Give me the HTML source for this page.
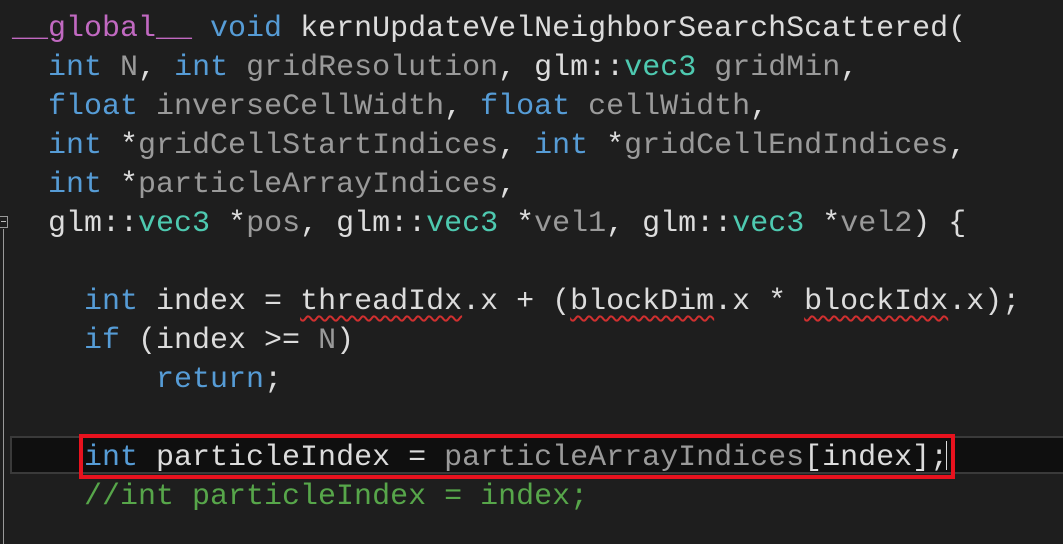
<!DOCTYPE html>
<html><head><meta charset="utf-8"><style>
html,body{margin:0;padding:0;background:#1e1e1e;width:1063px;height:544px;overflow:hidden;position:relative}
.l{position:absolute;left:12px;height:39px;line-height:39px;font-family:"Liberation Mono",monospace;font-size:30px;color:#dcdcdc;white-space:pre;letter-spacing:0;margin-top:2px}
.k{color:#569cd6}.m{color:#c169c1}.p{color:#9a9a9a}.t{color:#4ec9b0}.c{color:#57a64a}
.sq{text-decoration:underline wavy #d03030;text-decoration-thickness:1.5px;text-underline-offset:6px}
</style></head><body>
<div style="position:absolute;left:10px;top:436px;width:1060px;height:38px;background:#0f0f0f;border:2px solid #3a3a3a;box-sizing:border-box"></div>
<div style="position:absolute;left:79px;top:434px;width:876px;height:45px;border:4px solid #e8121e;box-sizing:border-box"></div>
<div style="position:absolute;left:946px;top:441px;width:1px;height:29px;background:#ddd"></div>
<div style="position:absolute;left:0;top:216px;width:8px;height:12px;border:1px solid #999;border-left:none;box-sizing:border-box"></div>
<div style="position:absolute;left:1px;top:221px;width:5px;height:1px;background:#bbb"></div>
<div style="position:absolute;left:3px;top:229px;width:1px;height:315px;background:#999"></div>
<div class="l" style="top:8px"><span class="m">__global__</span> <span class="k">void</span> kernUpdateVelNeighborSearchScattered(</div>
<div class="l" style="top:47px">  <span class="k">int</span> <span class="p">N</span>, <span class="k">int</span> <span class="p">gridResolution</span>, glm::<span class="t">vec3</span> <span class="p">gridMin</span>,</div>
<div class="l" style="top:86px">  <span class="k">float</span> <span class="p">inverseCellWidth</span>, <span class="k">float</span> <span class="p">cellWidth</span>,</div>
<div class="l" style="top:125px">  <span class="k">int</span> *<span class="p">gridCellStartIndices</span>, <span class="k">int</span> *<span class="p">gridCellEndIndices</span>,</div>
<div class="l" style="top:164px">  <span class="k">int</span> *<span class="p">particleArrayIndices</span>,</div>
<div class="l" style="top:203px">  glm::<span class="t">vec3</span> *<span class="p">pos</span>, glm::<span class="t">vec3</span> *<span class="p">vel1</span>, glm::<span class="t">vec3</span> *<span class="p">vel2</span>) {</div>
<div class="l" style="top:281px">    <span class="k">int</span> index = <span class="sq">threadIdx</span>.x + (<span class="sq">blockDim</span>.x * <span class="sq">blockIdx</span>.x);</div>
<div class="l" style="top:320px">    <span class="k">if</span> (index &gt;= <span class="p">N</span>)</div>
<div class="l" style="top:359px">        <span class="k">return</span>;</div>
<div class="l" style="top:437px">    <span class="k">int</span> particleIndex = <span class="p">particleArrayIndices</span>[index];</div>
<div class="l" style="top:476px">    <span class="c">//int particleIndex = index;</span></div>
</body></html>
